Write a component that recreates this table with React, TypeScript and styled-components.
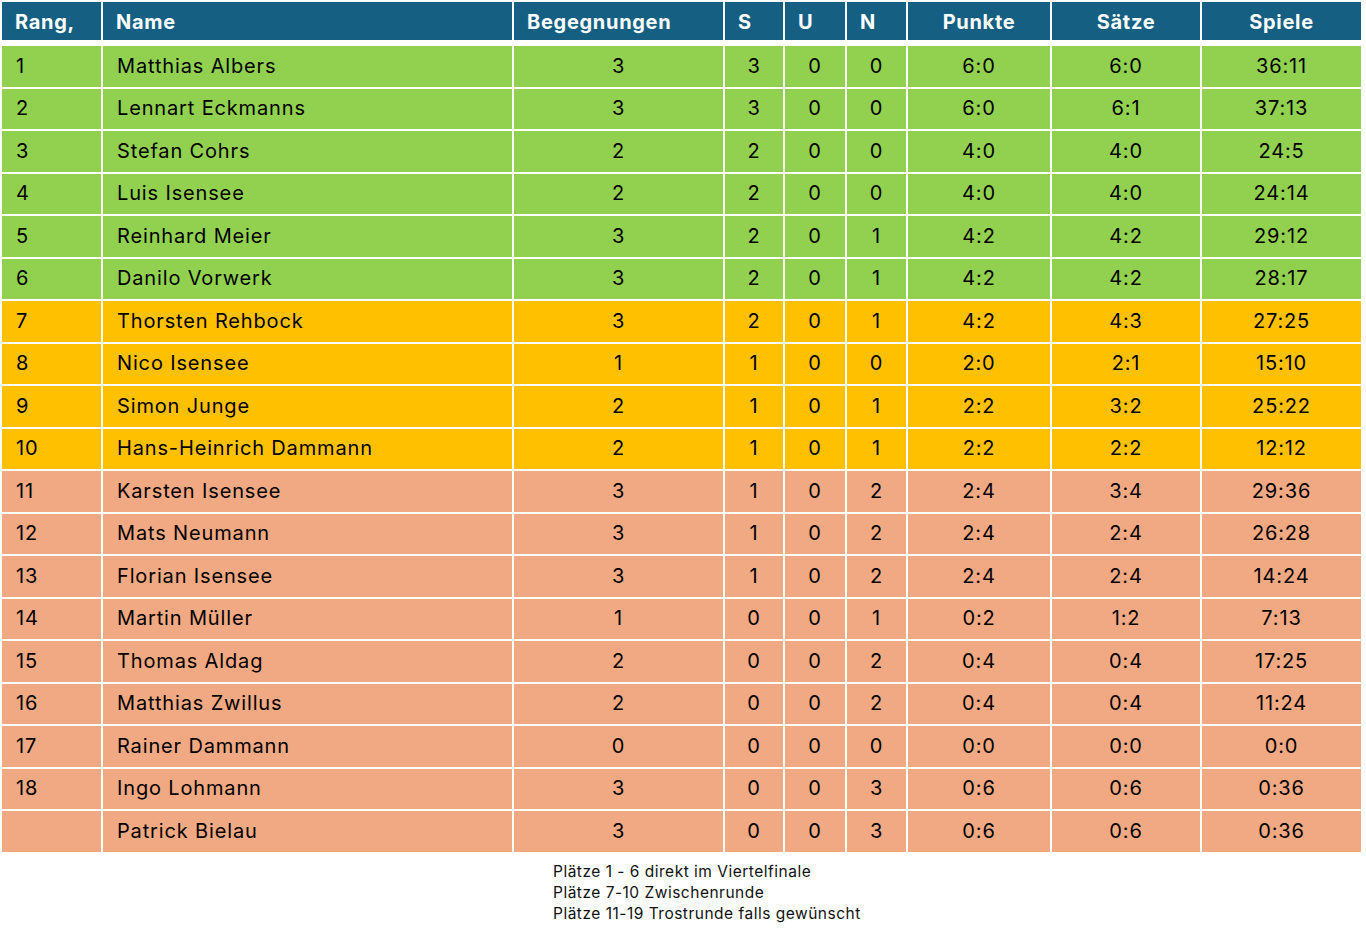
import React from "react";
import styled, { createGlobalStyle } from "styled-components";

type Tone = "green" | "yellow" | "salmon";

type PlayerRow = {
  rank: string;
  name: string;
  games: number;
  s: number;
  u: number;
  n: number;
  points: string;
  sets: string;
  legs: string;
  tone: Tone;
};

const rows: PlayerRow[] = [
  { rank: "1", name: "Matthias Albers", games: 3, s: 3, u: 0, n: 0, points: "6:0", sets: "6:0", legs: "36:11", tone: "green" },
  { rank: "2", name: "Lennart Eckmanns", games: 3, s: 3, u: 0, n: 0, points: "6:0", sets: "6:1", legs: "37:13", tone: "green" },
  { rank: "3", name: "Stefan Cohrs", games: 2, s: 2, u: 0, n: 0, points: "4:0", sets: "4:0", legs: "24:5", tone: "green" },
  { rank: "4", name: "Luis Isensee", games: 2, s: 2, u: 0, n: 0, points: "4:0", sets: "4:0", legs: "24:14", tone: "green" },
  { rank: "5", name: "Reinhard Meier", games: 3, s: 2, u: 0, n: 1, points: "4:2", sets: "4:2", legs: "29:12", tone: "green" },
  { rank: "6", name: "Danilo Vorwerk", games: 3, s: 2, u: 0, n: 1, points: "4:2", sets: "4:2", legs: "28:17", tone: "green" },
  { rank: "7", name: "Thorsten Rehbock", games: 3, s: 2, u: 0, n: 1, points: "4:2", sets: "4:3", legs: "27:25", tone: "yellow" },
  { rank: "8", name: "Nico Isensee", games: 1, s: 1, u: 0, n: 0, points: "2:0", sets: "2:1", legs: "15:10", tone: "yellow" },
  { rank: "9", name: "Simon Junge", games: 2, s: 1, u: 0, n: 1, points: "2:2", sets: "3:2", legs: "25:22", tone: "yellow" },
  { rank: "10", name: "Hans-Heinrich Dammann", games: 2, s: 1, u: 0, n: 1, points: "2:2", sets: "2:2", legs: "12:12", tone: "yellow" },
  { rank: "11", name: "Karsten Isensee", games: 3, s: 1, u: 0, n: 2, points: "2:4", sets: "3:4", legs: "29:36", tone: "salmon" },
  { rank: "12", name: "Mats Neumann", games: 3, s: 1, u: 0, n: 2, points: "2:4", sets: "2:4", legs: "26:28", tone: "salmon" },
  { rank: "13", name: "Florian Isensee", games: 3, s: 1, u: 0, n: 2, points: "2:4", sets: "2:4", legs: "14:24", tone: "salmon" },
  { rank: "14", name: "Martin Müller", games: 1, s: 0, u: 0, n: 1, points: "0:2", sets: "1:2", legs: "7:13", tone: "salmon" },
  { rank: "15", name: "Thomas Aldag", games: 2, s: 0, u: 0, n: 2, points: "0:4", sets: "0:4", legs: "17:25", tone: "salmon" },
  { rank: "16", name: "Matthias Zwillus", games: 2, s: 0, u: 0, n: 2, points: "0:4", sets: "0:4", legs: "11:24", tone: "salmon" },
  { rank: "17", name: "Rainer Dammann", games: 0, s: 0, u: 0, n: 0, points: "0:0", sets: "0:0", legs: "0:0", tone: "salmon" },
  { rank: "18", name: "Ingo Lohmann", games: 3, s: 0, u: 0, n: 3, points: "0:6", sets: "0:6", legs: "0:36", tone: "salmon" },
  { rank: "", name: "Patrick Bielau", games: 3, s: 0, u: 0, n: 3, points: "0:6", sets: "0:6", legs: "0:36", tone: "salmon" },
];

const toneColors: Record<Tone, string> = {
  green: "#92d050",
  yellow: "#ffc000",
  salmon: "#f1a983",
};

const App: React.FC = () => {
  return (
    <Page>
      <GlobalStyle />
      <Table>
        <HeaderRow>
          <HeadCell>Rang,</HeadCell>
          <HeadCell>Name</HeadCell>
          <HeadCell>Begegnungen</HeadCell>
          <HeadCell>S</HeadCell>
          <HeadCell>U</HeadCell>
          <HeadCell>N</HeadCell>
          <HeadCell $center>Punkte</HeadCell>
          <HeadCell $center>Sätze</HeadCell>
          <HeadCell $center>Spiele</HeadCell>
        </HeaderRow>
        {rows.map((r) => (
          <Row key={r.name}>
            <Cell $tone={r.tone}>{r.rank}</Cell>
            <Cell $tone={r.tone}>{r.name}</Cell>
            <Cell $tone={r.tone} $center>{r.games}</Cell>
            <Cell $tone={r.tone} $center>{r.s}</Cell>
            <Cell $tone={r.tone} $center>{r.u}</Cell>
            <Cell $tone={r.tone} $center>{r.n}</Cell>
            <Cell $tone={r.tone} $center>{r.points}</Cell>
            <Cell $tone={r.tone} $center>{r.sets}</Cell>
            <Cell $tone={r.tone} $center>{r.legs}</Cell>
          </Row>
        ))}
      </Table>
      <Notes>
        <p>Plätze 1 - 6 direkt im Viertelfinale</p>
        <p>Plätze 7-10 Zwischenrunde</p>
        <p>Plätze 11-19 Trostrunde falls gewünscht</p>
      </Notes>
    </Page>
  );
};

export default App;

const GlobalStyle = createGlobalStyle`
  html, body {
    margin: 0;
    padding: 0;
    background: #ffffff;
  }
  body {
    font-family: Inter, "Open Sans", sans-serif;
    color: #000000;
  }
`;

const Page = styled.div`
  width: 1366px;
  height: 934px;
  padding: 2px 0 0 2px;
  box-sizing: border-box;
  background: #ffffff;
`;

const Table = styled.div`
  display: flex;
  flex-direction: column;
  gap: 2px;
  width: 1359px;
`;

const columns = "99px 409px 209px 58px 60px 59px 142px 148px 159px";

const HeaderRow = styled.div`
  display: grid;
  grid-template-columns: ${columns};
  column-gap: 2px;
  height: 38px;
  margin-bottom: 4px;
`;

const Row = styled.div`
  display: grid;
  grid-template-columns: ${columns};
  column-gap: 2px;
  height: 40.5px;
`;

const HeadCell = styled.div<{ $center?: boolean }>`
  display: flex;
  align-items: center;
  justify-content: ${(p) => (p.$center ? "center" : "flex-start")};
  padding: 1px ${(p) => (p.$center ? "0" : "13px")} 0;
  background: #156082;
  color: #ffffff;
  font-family: Inter, "Open Sans", sans-serif;
  font-weight: 700;
  font-size: 20px;
  letter-spacing: 0.7px;
  white-space: nowrap;
`;

const Cell = styled.div<{ $tone: Tone; $center?: boolean }>`
  display: flex;
  align-items: center;
  justify-content: ${(p) => (p.$center ? "center" : "flex-start")};
  padding: 0 ${(p) => (p.$center ? "0" : "14px")} 1px;
  background: ${(p) => toneColors[p.$tone]};
  color: #000000;
  font-family: Inter, "Open Sans", sans-serif;
  font-size: 20px;
  letter-spacing: 0.85px;
  white-space: nowrap;
`;

const Notes = styled.div`
  margin: 9px 0 0 551px;
  font-family: Inter, "Open Sans", sans-serif;
  font-size: 15.5px;
  letter-spacing: 0.5px;
  line-height: 21px;
  color: #111111;

  p {
    margin: 0;
  }
`;
